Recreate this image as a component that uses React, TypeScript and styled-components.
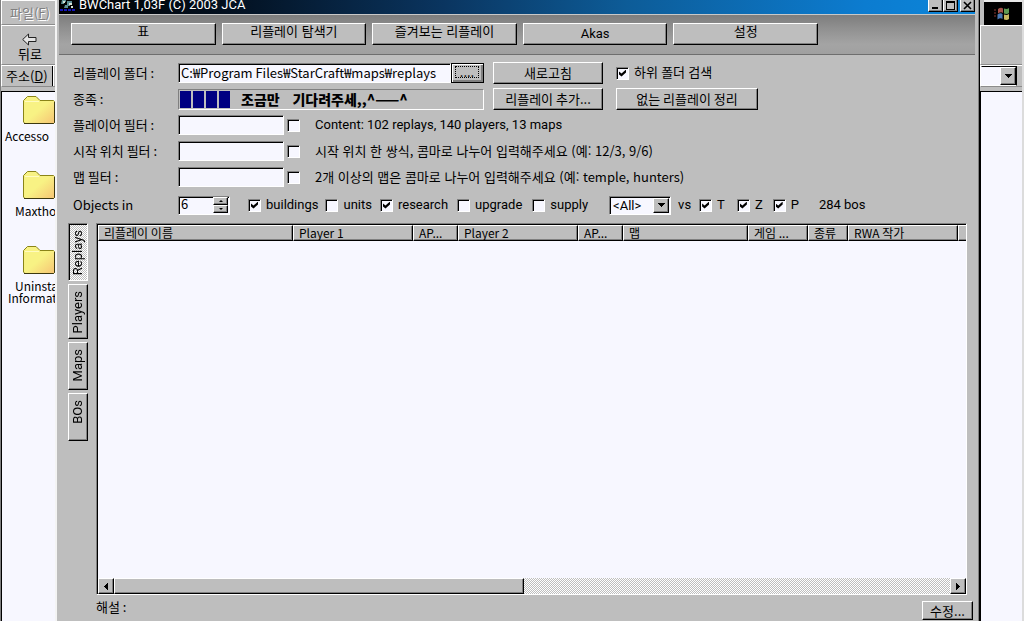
import React from "react";
import styled, { createGlobalStyle, css } from "styled-components";

const face = "#bebebe";
const paper = "#f7f7ff";
const shadow = "#808080";
const latin = `Roboto, "Noto Sans CJK KR", sans-serif`;

const GlobalStyle = createGlobalStyle`
  * { box-sizing: border-box; }
  body { margin: 0; background: ${paper}; }
  body, button, input, select {
    font-family: "Noto Sans CJK KR", "Liberation Sans", sans-serif;
    font-size: 12px;
    line-height: 16px;
    color: #000;
  }
`;

const raised = css`
  border: 1px solid;
  border-color: #fff #000 #000 #fff;
  box-shadow: inset -1px -1px 0 ${shadow};
  background: ${face};
`;

const sunken = css`
  border: 1px solid;
  border-color: ${shadow} #fff #fff ${shadow};
  box-shadow: inset 1px 1px 0 #000;
  background: ${paper};
`;

const checker = css`
  background: repeating-conic-gradient(#bebebe 0 25%, #fff 0 50%) 0 0 / 2px 2px;
`;

const Spacer = styled.span<{ $w: number }>`
  flex: none;
  width: ${(p) => p.$w}px;
`;

const Desktop = styled.div`
  display: grid;
  grid-template-columns: 55px minmax(0, 1fr) 44px;
  height: 100vh;
  overflow: hidden;
`;

/* ---- explorer window behind ---- */
const ExplorerSide = styled.aside`
  display: flex;
  flex-direction: column;
  min-width: 0;
  overflow: hidden;
  border-left: 1px solid ${shadow};
  background: ${face};
`;

const ExplorerRight = styled(ExplorerSide)`
  border-left: 0;
  border-right: 2px solid #dcdcdc;
`;

const ExplorerRow = styled.div<{ $h: number }>`
  display: flex;
  flex: none;
  align-items: center;
  height: ${(p) => p.$h}px;
  border-top: 1px solid #fff;
  border-bottom: 1px solid #8c8c8c;
  border-left: 1px solid #fff;
  white-space: nowrap;
`;

const MenuButton = styled.button`
  border: 0;
  padding: 0 0 0 8px;
  background: none;
  color: ${shadow};
  font-size: 13px;
  text-shadow: 1px 1px 0 #fff;
`;

const BackButton = styled.button`
  display: flex;
  flex-direction: column;
  align-items: center;
  border: 0;
  padding: 5px 0 0 16px;
  background: none;
  font-size: 13px;
`;

const AddressLabel = styled.label`
  padding-left: 4px;
  font-size: 13px;
`;

const AddressEdge = styled.span`
  width: 2px;
  height: 20px;
  margin-left: 4px;
  border-left: 1px solid #000;
  background: #fff;
`;

const FolderPane = styled.div`
  display: flex;
  flex: 1;
  flex-direction: column;
  margin-top: 4px;
  padding-top: 3px;
  border-top: 1px solid #000;
  border-left: 1px solid #000;
  background: ${paper};
`;

const FolderItem = styled.a`
  display: flex;
  flex: none;
  flex-direction: column;
  align-items: flex-end;
  height: 75px;
  color: #000;
  text-decoration: none;
  line-height: 12px;
  white-space: nowrap;
  svg { flex: none; margin-bottom: 5px; }
`;

const FolderName = styled.span<{ $indent: number }>`
  width: 100%;
  padding-left: ${(p) => p.$indent}px;
`;

const WindowsLogo = styled.div`
  display: flex;
  flex: none;
  align-items: center;
  justify-content: center;
  height: 25px;
  margin-left: 4px;
  border-top: 2px solid #e8e8e8;
  background: #000;
`;

const AddressDrop = styled.div`
  display: flex;
  justify-content: flex-end;
  width: 36px;
  height: 20px;
  border: 1px solid;
  border-color: #000 #000 #fff ${paper};
  background: ${paper};
`;

/* ---- main window ---- */
const Window = styled.main`
  display: flex;
  flex-direction: column;
  min-width: 0;
  padding: 0 2px;
  border-left: 2px solid #f4f4f4;
  border-right: 1px solid #000;
  background: ${face};
  box-shadow: inset -1px 0 0 ${shadow};
`;

const TitleBar = styled.header`
  display: flex;
  flex: none;
  justify-content: space-between;
  height: 15px;
  margin-right: 2px;
  border-bottom: 1px solid #c8c8c8;
  background: linear-gradient(90deg, #000 0, #03101f 18%, #0a3560 42%, #0d5c98 62%, #0c7cd0 88%, #0c86da 100%);
  overflow: hidden;
`;

const Title = styled.h1`
  display: flex;
  gap: 3px;
  align-items: flex-start;
  margin: 0;
  color: #fff;
  font-family: ${latin};
  font-size: 13px;
  font-weight: 400;
  line-height: 10px;
  white-space: nowrap;
`;

const Captions = styled.div`
  display: flex;
  gap: 2px;
`;

const CaptionButton = styled.button`
  ${raised}
  display: flex;
  align-items: flex-end;
  justify-content: center;
  width: 15px;
  height: 12px;
  padding: 0;
  border-top: 0;
`;

const CaptionPair = styled.div`
  display: flex;
`;

const CommandBar = styled.nav`
  flex: none;
  height: 40px;
  margin-right: 2px;
  padding: 8px 12px 0;
  border-bottom: 1px solid #6e6e6e;
  background: linear-gradient(180deg, #7d7d7d 0, #8e8e8e 30%, #a4a4a4 75%, #a0a0a0 100%);
`;

const Commands = styled.div`
  display: grid;
  grid-template-columns: repeat(5, 1fr);
  gap: 6px;
  max-width: 747px;
`;

const PushButton = styled.button<{ $w?: number; $h?: number }>`
  ${raised}
  flex: none;
  width: ${(p) => (p.$w ? p.$w + "px" : "100%")};
  height: ${(p) => p.$h ?? 22}px;
  padding: 0;
  overflow: hidden;
  white-space: nowrap;
  line-height: 18px;
  font-size: 13px;
`;

const CommandButton = styled(PushButton)`
  line-height: 14px;
  padding-bottom: 6px;
  &:lang(en) {
    padding-bottom: 0;
    font-family: ${latin};
  }
`;

const BrowseButton = styled(PushButton)`
  border-color: #000;
  box-shadow: inset 1px 1px 0 #fff, inset -2px -2px 0 ${shadow};
  padding: 2px 4px 4px 3px;
  span { display: block; border: 1px dotted #000; line-height: 10px; height: 12px; }
`;

const Form = styled.form`
  flex: none;
  padding: 5px 0 0 14px;
`;

const Row = styled.div<{ $h?: number }>`
  display: flex;
  align-items: center;
  height: ${(p) => p.$h ?? 26}px;
  white-space: nowrap;
`;

const FieldLabel = styled.label`
  flex: none;
  width: 105px;
  font-size: 13px;
  line-height: 16px;
`;

const TextBox = styled.input<{ $w: number }>`
  ${sunken}
  width: ${(p) => p.$w}px;
  height: 20px;
  padding: 0 2px 2px;
  outline: 0;
  font-size: 13px;
`;

const Hint = styled.span`
  margin-left: 15px;
  font-size: 13px;
  &:lang(en) { font-family: ${latin}; }
`;

const CheckLabel = styled.label<{ $gap: number }>`
  display: inline-flex;
  align-items: center;
  gap: 5px;
  margin-left: ${(p) => p.$gap}px;
  font-family: ${latin};
  font-size: 13px;
`;

const Tick = styled.input`
  ${sunken}
  appearance: none;
  display: block;
  flex: none;
  width: 13px;
  height: 13px;
  margin: 0;
  &:checked::after {
    content: "";
    display: block;
    width: 7px;
    height: 7px;
    margin: 2px;
    background: #000;
    clip-path: polygon(0 28%, 36% 58%, 100% 0, 100% 42%, 36% 100%, 0 72%);
  }
`;

const Progress = styled.div`
  display: flex;
  flex: none;
  gap: 2px;
  align-items: center;
  width: 306px;
  height: 21px;
  margin-right: 9px;
  padding: 0 1px;
  border: 1px solid;
  border-color: ${shadow} #fff #fff ${shadow};
`;

const Block = styled.span`
  width: 11px;
  height: 17px;
  background: #000082;
`;

const Notice = styled.strong`
  margin-left: 9px;
  font-size: 14px;
  font-weight: 900;
  line-height: 17px;
  white-space: pre;
`;

const SpinBox = styled.div`
  ${sunken}
  display: flex;
  align-items: center;
  width: 52px;
  height: 19px;
  padding: 1px;
  input {
    flex: 1;
    min-width: 0;
    border: 0;
    outline: 0;
    padding: 0 1px 2px;
    background: none;
    font-size: 13px;
  }
`;

const SpinArrows = styled.div`
  display: flex;
  flex-direction: column;
`;

const SpinButton = styled.button`
  ${raised}
  display: flex;
  align-items: center;
  justify-content: center;
  width: 15px;
  height: 8px;
  padding: 0;
`;

const SelectBox = styled.div`
  ${sunken}
  display: flex;
  width: 62px;
  height: 19px;
  margin-left: 21px;
  padding: 1px;
  select {
    flex: 1;
    min-width: 0;
    appearance: none;
    border: 0;
    outline: 0;
    padding: 0 0 0 2px;
    background: none;
    font-family: ${latin};
    font-size: 13px;
  }
`;

const ArrowButton = styled.button<{ $h?: number }>`
  ${raised}
  display: flex;
  flex: none;
  align-items: center;
  justify-content: center;
  width: 16px;
  height: ${(p) => p.$h ?? 15}px;
  padding: 0;
`;

const Versus = styled.span`
  margin-left: 7px;
  font-family: ${latin};
  font-size: 13px;
`;

const Workspace = styled.section`
  display: flex;
  flex: 1;
  gap: 8px;
  min-height: 0;
  margin-top: 3px;
  padding: 0 10px 0 9px;
`;

const Tabs = styled.div`
  display: flex;
  flex: none;
  flex-direction: column;
  gap: 3px;
  width: 20px;
`;

const Tab = styled.button<{ $h: number; $active?: boolean }>`
  ${(p) => (p.$active ? css`${sunken} ${checker}` : raised)}
  display: flex;
  align-items: flex-start;
  justify-content: center;
  width: 20px;
  height: ${(p) => p.$h}px;
  padding: 6px 0 0;
  font-family: ${latin};
  font-size: 13px;
  span {
    writing-mode: vertical-rl;
    transform: rotate(180deg);
    line-height: 16px;
  }
`;

const ListFrame = styled.div`
  display: flex;
  flex: 1;
  flex-direction: column;
  min-width: 0;
  border: 1px solid;
  border-color: ${shadow} #fff #fff ${shadow};
  background: ${paper};
`;

const ListBody = styled.div`
  flex: 1;
  min-height: 0;
  border-top: 1px solid #000;
  border-left: 1px solid #000;
`;

const ReplayTable = styled.table`
  width: 100%;
  table-layout: fixed;
  border-collapse: separate;
  border-spacing: 0;
  th {
    ${raised}
    height: 16px;
    padding: 0 0 0 5px;
    overflow: hidden;
    font-size: 12px;
    font-weight: 400;
    line-height: 14px;
    text-align: left;
    white-space: nowrap;
  }
  th:last-child { border-right: 0; box-shadow: inset 0 -1px 0 ${shadow}; }
`;

const ScrollBar = styled.div`
  ${checker}
  display: flex;
  flex: none;
  justify-content: space-between;
  height: 16px;
  border-left: 1px solid #000;
`;

const ScrollTrack = styled.div`
  flex: 1;
`;

const ScrollThumb = styled.div`
  ${raised}
  width: 49%;
  height: 16px;
`;

const Footer = styled.footer`
  display: flex;
  flex: none;
  justify-content: space-between;
  height: 26px;
  padding: 0 4px 0 37px;
  font-size: 13px;
  span { padding-top: 4px; }
  button { margin-top: 6px; }
`;

const Arrow = ({ dir, small }: { dir: "up" | "down" | "left" | "right"; small?: boolean }) => {
  const paths = {
    up: "M0 4h7v-1h-1v-1h-1v-1h-1v-1h-1v1h-1v1h-1v1h-1z",
    down: "M0 0h7v1h-1v1h-1v1h-1v1h-1v-1h-1v-1h-1v-1h-1z",
    left: "M4 0v7h-1v-1h-1v-1h-1v-1h-1v-1h1v-1h1v-1h1v-1z",
    right: "M0 0v7h1v-1h1v-1h1v-1h1v-1h-1v-1h-1v-1h-1v-1z",
  };
  const flat = dir === "up" || dir === "down";
  const w = small ? 4 : flat ? 7 : 4;
  const h = small ? 2 : flat ? 4 : 7;
  return (
    <svg width={w} height={h} viewBox={flat ? "0 0 7 4" : "0 0 4 7"} shapeRendering={small ? "auto" : "crispEdges"} aria-hidden="true">
      <path d={paths[dir]} />
    </svg>
  );
};

const Folder = () => (
  <svg width="32" height="30" viewBox="0 0 32 30" aria-hidden="true">
    <defs>
      <linearGradient id="folder" x1="0" y1="0" x2="1" y2="1">
        <stop offset="0.5" stopColor="#f8f284" />
        <stop offset="1" stopColor="#f6c474" />
      </linearGradient>
    </defs>
    <path d="M.5 27V5.500L4.500 1.500H13l4 4h13.500l1 1V27.500L30.500 28.500H2Z" fill="url(#folder)" stroke="#8a8418" />
    <path d="M2 6.500H16" stroke="#fffbc0" />
    <path d="M1 28.500H30.500L31.500 27.500V7" fill="none" stroke="#3c3810" />
  </svg>
);

const Check = ({ label, on, gap }: { label: string; on?: boolean; gap: number }) => (
  <CheckLabel $gap={gap}>
    <Tick type="checkbox" defaultChecked={on} />
    {label}
  </CheckLabel>
);

const commands = [
  { name: "표", lang: "ko" },
  { name: "리플레이 탐색기", lang: "ko" },
  { name: "즐겨보는 리플레이", lang: "ko" },
  { name: "Akas", lang: "en" },
  { name: "설정", lang: "ko" },
];

const filters = [
  { id: "player", lang: "en", label: "플레이어 필터 :", hint: "Content: 102 replays, 140 players, 13 maps" },
  { id: "start", lang: "ko", label: "시작 위치 필터 :", hint: "시작 위치 한 쌍식, 콤마로 나누어 입력해주세요 (예: 12/3, 9/6)" },
  { id: "map", lang: "ko", label: "맵 필터 :", hint: "2개 이상의 맵은 콤마로 나누어 입력해주세요 (예: temple, hunters)" },
];

const columns: [string, number | undefined][] = [
  ["리플레이 이름", 195],
  ["Player 1", 120],
  ["AP...", 45],
  ["Player 2", 120],
  ["AP...", 45],
  ["맵", 125],
  ["게임 ...", 60],
  ["종류", 40],
  ["RWA 작가", 110],
  ["", undefined],
];

const tabs = [
  { name: "Replays", h: 58 },
  { name: "Players", h: 55 },
  { name: "Maps", h: 48 },
  { name: "BOs", h: 48 },
];

const folders = [
  { lines: ["Accesso"], indent: 3 },
  { lines: ["Maxtho"], indent: 13 },
  { lines: ["Uninsta", "Informati"], indent: 6 },
];

export default function App() {
  return (
    <>
      <GlobalStyle />
      <Desktop>
        <ExplorerSide>
          <ExplorerRow $h={25}>
            <MenuButton>파일(<u>F</u>)</MenuButton>
          </ExplorerRow>
          <ExplorerRow $h={40}>
            <BackButton>
              <svg width="15" height="13" viewBox="0 0 15 13" aria-hidden="true">
                <path d="M.7 6.500L6.500 1V4.500H14V8.500H6.500V12Z" fill="#e4e4e4" stroke="#222" />
              </svg>
              뒤로
            </BackButton>
          </ExplorerRow>
          <ExplorerRow $h={22}>
            <AddressLabel>주소(<u>D</u>)</AddressLabel>
            <AddressEdge />
          </ExplorerRow>
          <FolderPane>
            {folders.map((f) => (
              <FolderItem href="#" key={f.lines[0]}>
                <Folder />
                {f.lines.map((line, i) => (
                  <FolderName key={line} $indent={f.lines.length > 1 && i === 0 ? 13 : f.indent}>{line}</FolderName>
                ))}
              </FolderItem>
            ))}
          </FolderPane>
        </ExplorerSide>

        <Window>
          <TitleBar>
            <Title>
              <svg width="17" height="12" viewBox="0 0 17 12" aria-hidden="true">
                <path d="M3 0h4v2h-2v2h-3zM8 1h5v3h-2v2h-3zM6 5h3v3h-4z" fill="#5d8f96" />
                <path d="M4 1h2v2h-2zM10 3h3v2h-3zM12 6h2v2h-2z" fill="#d6e2d4" />
                <path d="M1 9h3v2h-3zM5 9h3v2h-3zM9 9h3v2h-3zM13 9h3v2h-3z" fill="#1414b8" />
              </svg>
              BWChart 1,03F (C) 2003 JCA
            </Title>
            <Captions>
              <CaptionPair>
                <CaptionButton aria-label="Minimize">
                  <svg width="11" height="10" viewBox="0 0 11 10"><path d="M2 6h6v2h-6z" /></svg>
                </CaptionButton>
                <CaptionButton aria-label="Maximize">
                  <svg width="11" height="10" viewBox="0 0 11 10" shapeRendering="crispEdges"><path d="M1 0h9v9h-9zM2 2v6h7v-6z" fillRule="evenodd" /></svg>
                </CaptionButton>
              </CaptionPair>
              <CaptionButton aria-label="Close">
                <svg width="11" height="10" viewBox="0 0 11 10"><path d="M2 1l7 7M9 1l-7 7" stroke="#000" strokeWidth="1.600" /></svg>
              </CaptionButton>
            </Captions>
          </TitleBar>

          <CommandBar>
            <Commands>
              {commands.map((c) => (
                <CommandButton key={c.name} lang={c.lang}>{c.name}</CommandButton>
              ))}
            </Commands>
          </CommandBar>

          <Form onSubmit={(e) => e.preventDefault()}>
            <Row>
              <FieldLabel htmlFor="folder-path">리플레이 폴더 :</FieldLabel>
              <TextBox id="folder-path" $w={273} defaultValue="C:₩Program Files₩StarCraft₩maps₩replays" />
              <BrowseButton type="button" $w={33} $h={20} aria-label="Browse"><span>....</span></BrowseButton>
              <Spacer $w={9} />
              <PushButton type="button" $w={110}>새로고침</PushButton>
              <Check label="하위 폴더 검색" on gap={13} />
            </Row>
            <Row>
              <FieldLabel as="span">종족 :</FieldLabel>
              <Progress role="status">
                <Block /><Block /><Block /><Block />
                <Notice>조금만    기다려주세,,^——^</Notice>
              </Progress>
              <PushButton type="button" $w={110}>리플레이 추가...</PushButton>
              <Spacer $w={13} />
              <PushButton type="button" $w={142}>없는 리플레이 정리</PushButton>
            </Row>
            {filters.map((f) => (
              <Row key={f.id}>
                <FieldLabel htmlFor={f.id}>{f.label}</FieldLabel>
                <TextBox id={f.id} $w={106} />
                <Spacer $w={3} />
                <Tick type="checkbox" aria-label={f.label} />
                <Hint lang={f.lang}>{f.hint}</Hint>
              </Row>
            ))}
            <Row $h={30}>
              <FieldLabel htmlFor="objects">Objects in</FieldLabel>
              <SpinBox>
                <input id="objects" defaultValue="6" />
                <SpinArrows>
                  <SpinButton type="button" aria-label="Increase"><Arrow dir="up" small /></SpinButton>
                  <SpinButton type="button" aria-label="Decrease"><Arrow dir="down" small /></SpinButton>
                </SpinArrows>
              </SpinBox>
              <Check label="buildings" on gap={18} />
              <Check label="units" gap={7} />
              <Check label="research" on gap={8} />
              <Check label="upgrade" gap={9} />
              <Check label="supply" gap={10} />
              <SelectBox>
                <select aria-label="Race" defaultValue="all">
                  <option value="all">&lt;All&gt;</option>
                </select>
                <ArrowButton type="button" aria-label="Open list"><Arrow dir="down" /></ArrowButton>
              </SelectBox>
              <Versus>vs</Versus>
              <Check label="T" on gap={8} />
              <Check label="Z" on gap={12} />
              <Check label="P" on gap={10} />
              <Spacer $w={5} />
              <Hint lang="en">284 bos</Hint>
            </Row>
          </Form>

          <Workspace>
            <Tabs role="tablist">
              {tabs.map((t, i) => (
                <Tab key={t.name} role="tab" aria-selected={i === 0} $h={t.h} $active={i === 0}>
                  <span>{t.name}</span>
                </Tab>
              ))}
            </Tabs>
            <ListFrame>
              <ListBody>
                <ReplayTable>
                  <colgroup>
                    {columns.map(([, w], i) => <col key={i} width={w} />)}
                  </colgroup>
                  <thead>
                    <tr>{columns.map(([name], i) => <th key={i} scope="col">{name}</th>)}</tr>
                  </thead>
                </ReplayTable>
              </ListBody>
              <ScrollBar>
                <ArrowButton $h={16} aria-label="Scroll left"><Arrow dir="left" /></ArrowButton>
                <ScrollTrack><ScrollThumb /></ScrollTrack>
                <ArrowButton $h={16} aria-label="Scroll right"><Arrow dir="right" /></ArrowButton>
              </ScrollBar>
            </ListFrame>
          </Workspace>

          <Footer>
            <span>해설 :</span>
            <PushButton $w={51} $h={19}>수정...</PushButton>
          </Footer>
        </Window>

        <ExplorerRight>
          <WindowsLogo>
            <svg width="20" height="18" viewBox="0 0 20 18" aria-hidden="true">
              <path d="M5 4q3-2 5-.5V8q-2-1.500-5 .5z" fill="#a5524a" />
              <path d="M11 3.500q3 1 5-.5V8q-2 1.500-5 .5z" fill="#5f9a54" />
              <path d="M4.500 9.500q3-2 5-.5v5q-2-1.500-5 .5z" fill="#4a78b4" />
              <path d="M11 9.500q3 1 5-.5v5q-2 1.500-5 .5z" fill="#c8b860" />
              <path d="M1 5h2M1 8h2M1 11h2" stroke="#8a3a34" />
            </svg>
          </WindowsLogo>
          <ExplorerRow $h={40} />
          <ExplorerRow $h={22}>
            <AddressDrop>
              <ArrowButton $h={18} aria-label="Address list"><Arrow dir="down" /></ArrowButton>
            </AddressDrop>
          </ExplorerRow>
          <FolderPane />
        </ExplorerRight>
      </Desktop>
    </>
  );
}
